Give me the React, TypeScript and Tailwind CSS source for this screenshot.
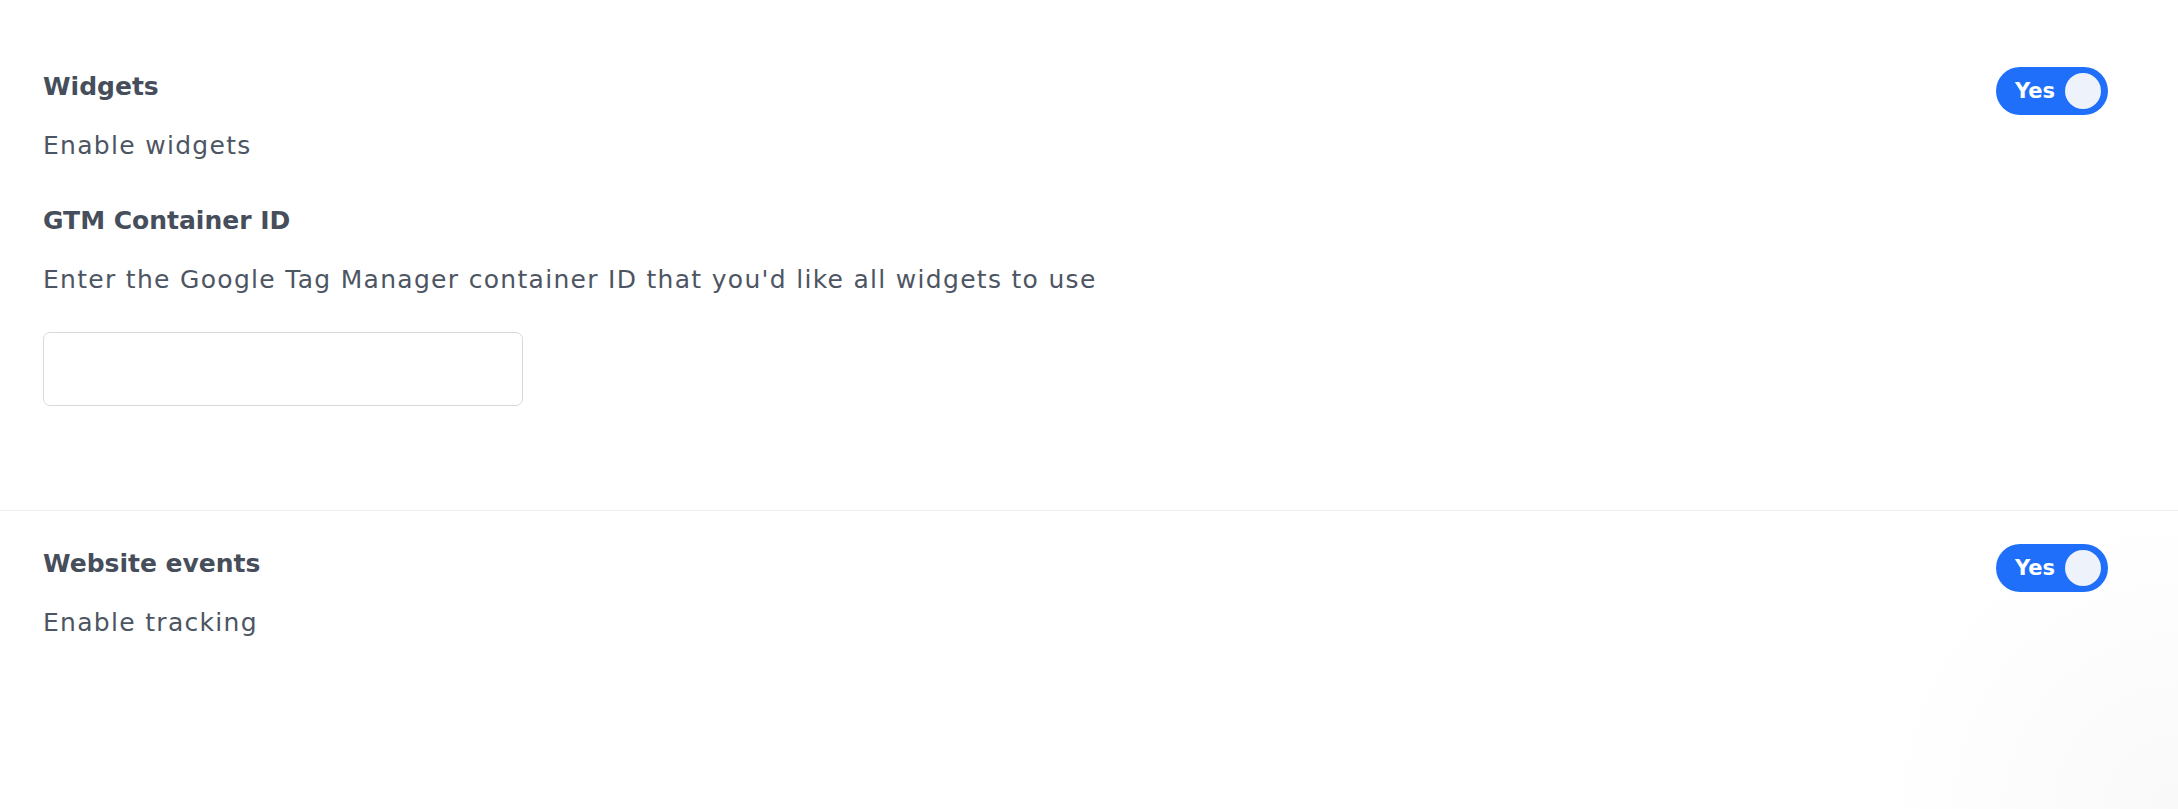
import React from 'react';

const Toggle = () => {
  return (
    <button
      type="button"
      className="flex h-[48px] w-[112px] shrink-0 items-center justify-between rounded-full bg-[#1f6ffa] pl-[19px] pr-[7px]"
    >
      <span className="text-[21px] font-bold leading-none text-white">Yes</span>
      <span className="h-[36px] w-[36px] rounded-full bg-[#eef2fb]" />
    </button>
  );
};

export default function App() {
  return (
    <div
      className="min-h-screen w-full bg-white bg-[radial-gradient(circle_at_100%_100%,#f9f9f9_0px,#ffffff_300px)]"
      style={{ fontFamily: '"DejaVu Sans", sans-serif' }}
    >
      {/* Widgets */}
      <section className="flex items-start justify-between pl-[43px] pr-[70px] pt-[67px] pb-[104px]">
        <div className="flex flex-col pt-[2px]">
          <h3 className="text-[25px] font-bold leading-[36px] text-[#464e5b]">Widgets</h3>
          <p className="mt-[23px] text-[25px] leading-[36px] tracking-[1.3px] text-[#4d5563]">
            Enable widgets
          </p>

          <h3 className="mt-[39px] text-[25px] font-bold leading-[36px] text-[#464e5b]">
            GTM Container ID
          </h3>
          <p className="mt-[23px] text-[25px] leading-[36px] tracking-[1.3px] text-[#4d5563]">
            Enter the Google Tag Manager container ID that you'd like all widgets to use
          </p>

          <input
            type="text"
            className="mt-[34px] h-[74px] w-[480px] rounded-[7px] border-[1.5px] border-[#d6d9de] bg-white px-4 text-[25px] outline-none"
          />
        </div>
        <Toggle />
      </section>

      {/* Website events */}
      <section className="flex items-start justify-between border-t border-[#edf0f3] pl-[43px] pr-[70px] pt-[33px] pb-10">
        <div className="flex flex-col pt-[2px]">
          <h3 className="text-[25px] font-bold leading-[36px] text-[#464e5b]">Website events</h3>
          <p className="mt-[23px] text-[25px] leading-[36px] tracking-[1.3px] text-[#4d5563]">
            Enable tracking
          </p>
        </div>
        <Toggle />
      </section>
    </div>
  );
}
